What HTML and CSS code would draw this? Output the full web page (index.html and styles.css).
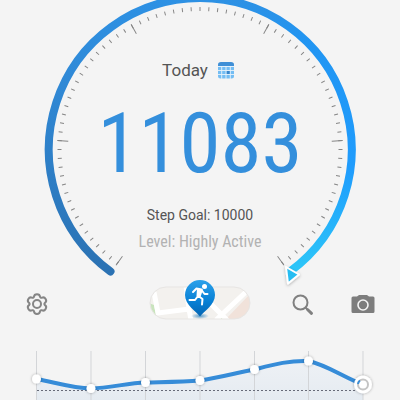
FILE: index.html
```html
<!DOCTYPE html>
<html lang="en">
<head>
<meta charset="utf-8">
<meta name="viewport" content="width=device-width, initial-scale=1">
<title>Step counter</title>
<link rel="stylesheet" href="styles.css">
</head>
<body>
<main class="app">
  <section class="dial">
    <svg class="dial-ring" viewBox="0 0 400 280" aria-hidden="true">
      <defs>
        <linearGradient id="left" gradientUnits="userSpaceOnUse" x1="0" y1="0" x2="0" y2="271">
          <stop offset="0" stop-color="#2d91e4"/>
          <stop offset="0.3" stop-color="#3089d6"/>
          <stop offset="1" stop-color="#2b72b3"/>
        </linearGradient>
        <linearGradient id="right" gradientUnits="userSpaceOnUse" x1="0" y1="0" x2="0" y2="271">
          <stop offset="0" stop-color="#2d91e4"/>
          <stop offset="0.15" stop-color="#2195f2"/>
          <stop offset="0.62" stop-color="#1f9cfd"/>
          <stop offset="1" stop-color="#2cc6f8"/>
        </linearGradient>
        <filter id="soft" x="-50%" y="-50%" width="200%" height="200%">
          <feDropShadow dx="0" dy="1" stdDeviation="1.5" flood-opacity="0.3"/>
        </filter>
      </defs>
      <path class="tick" stroke-width="4" pathLength="288.4" stroke-dasharray="0.4 3.2" d="M117.8 263.5A140.5 140.5 0 1 1 282.2 263.5"/>
      <path class="tick" stroke-width="11" pathLength="288.4" stroke-dasharray="0.4 57.2" d="M119.6 261A137.5 137.5 0 1 1 280.4 261"/>
      <path class="ring" stroke="url(#right)" d="M199.5 -2A151.5 151.5 0 0 1 290 271.5"/>
      <path class="ring ring-start" stroke="url(#left)" d="M110.5 271.5A151.5 151.5 0 0 1 200 -2"/>
      <path d="M286 267L299 274.5L288 283.500Z" fill="#26bdf2" stroke="#fff" stroke-width="2" stroke-linejoin="round" filter="url(#soft)"/>
    </svg>
    <div class="dial-text">
      <button class="day" type="button">Today
        <svg width="16" height="18" viewBox="0 0 16 18" aria-hidden="true">
          <path d="M0 5V3.500Q0 1 3 1H13Q16 1 16 3.500V5Z" fill="#3f8fd6"/>
          <path d="M0 5.500H16V15Q16 17.500 13.500 17.500H2.500Q0 17.500 0 15Z" fill="#74bdf3"/>
          <path d="M8.500 10H12v3H8.500z" fill="#3585cd"/>
          <path d="M0 5.500H16M0 9.500H16M0 13.500H16M3.700 5V18M8 5V18M12.300 5V18" stroke="#e8f3fb" stroke-width="0.900"/>
        </svg>
      </button>
      <p class="steps">11083</p>
      <p class="goal">Step Goal: 10000</p>
      <p class="level">Level: Highly Active</p>
    </div>
  </section>

  <nav class="toolbar">
    <button class="icon" type="button" aria-label="Settings">
      <svg width="24" height="24" viewBox="0 0 24 24" fill="none" stroke="#858585" stroke-width="2" stroke-linejoin="round">
        <path d="M9 4.600C9.300 1.300 14.700 1.300 15 4.600Q15.300 6.300 17 5.700C20 4.300 22.700 9 20 10.800Q18.700 12 20 13.200C22.700 15 20 19.700 17 18.300Q15.300 17.700 15 19.400C14.700 22.700 9.300 22.700 9 19.400Q8.700 17.700 7 18.300C4 19.700 1.300 15 4 13.200Q5.300 12 4 10.800C1.300 9 4 4.300 7 5.700Q8.700 6.300 9 4.600Z"/>
        <circle cx="12" cy="12" r="4"/>
      </svg>
    </button>
    <button class="map" type="button" aria-label="Map">
      <svg width="102" height="44" viewBox="0 2 102 44">
        <defs>
          <clipPath id="pill"><rect x="1" y="9" width="100" height="32" rx="16"/></clipPath>
          <linearGradient id="pin" x1="0" y1="0" x2="0" y2="1">
            <stop offset="0" stop-color="#2ba1ea"/>
            <stop offset="0.6" stop-color="#077fd4"/>
            <stop offset="1" stop-color="#0665b1"/>
          </linearGradient>
          <radialGradient id="glow"><stop offset="0" stop-color="#1675b8" stop-opacity="0.7"/><stop offset="1" stop-color="#1675b8" stop-opacity="0"/></radialGradient>
        </defs>
        <g clip-path="url(#pill)">
          <path d="M0 8H102V42H0Z" fill="#f3f1ee"/>
          <path d="M76 42L102 15V42Z" fill="#f1e2da"/>
          <path d="M0 25L5 27L8 42H0ZM67 42L71 38L76 42Z" fill="#c9e4bd"/>
          <path d="M5 14L9 35L40 31L42 42M40 31L37 8M67 42L100 11M62 26L80 44" fill="none" stroke="#fff" stroke-width="5"/>
        </g>
        <rect x="1" y="9" width="100" height="32" rx="16" fill="none" stroke="#e7e5e3"/>
        <ellipse cx="51" cy="38" rx="9" ry="3" fill="url(#glow)"/>
        <path d="M51 38.500C47 33 36 27 36 17A15 15 0 0 1 66 17C66 27 55 33 51 38.500Z" fill="url(#pin)"/>
        <circle cx="55.500" cy="8.500" r="2.500" fill="#fff"/>
        <path d="M44 14L47.500 10.500L52.500 11.500L49.500 18L53.500 21L53 26.500M49 18L46 22H40.500M52.500 12L55.500 16H58.500" fill="none" stroke="#fff" stroke-width="2" stroke-linecap="round" stroke-linejoin="round"/>
        <path d="M48 10.500L54 11.500L51.500 19L47.500 18Z" fill="#fff"/>
      </svg>
    </button>
    <div class="tools">
      <button class="icon" type="button" aria-label="Search">
        <svg width="24" height="24" viewBox="0 0 24 24" fill="none" stroke="#808080">
          <circle cx="9.500" cy="10.500" r="7" stroke-width="2"/>
          <path d="M14.500 15.500L16 17" stroke-width="2"/>
          <path d="M16.500 17.500L20.500 21.300" stroke-width="3" stroke-linecap="round"/>
        </svg>
      </button>
      <button class="icon" type="button" aria-label="Camera">
        <svg width="24" height="24" viewBox="0 0 24 24">
          <path d="M2 4.500H6L8 3H16L18 4.500H22Q23.500 4.500 23.500 6V19.500Q23.500 21 22 21H2Q0.500 21 0.500 19.500V6Q0.500 4.500 2 4.500Z" fill="#7d7d7d"/>
          <circle cx="12" cy="13" r="5" fill="none" stroke="#f4f4f4" stroke-width="1.600"/>
        </svg>
      </button>
    </div>
  </nav>

  <svg class="chart" viewBox="0 0 400 52" role="img" aria-label="Steps over the last seven days">
    <defs>
      <linearGradient id="area" x1="0" y1="0" x2="0" y2="1">
        <stop offset="0" stop-color="#eef1f5"/>
        <stop offset="1" stop-color="#e5ebf1"/>
      </linearGradient>
      <filter id="dot" x="-60%" y="-60%" width="220%" height="220%">
        <feDropShadow dx="0" dy="0" stdDeviation="1.500" flood-opacity="0.35"/>
      </filter>
    </defs>
    <path fill="url(#area)" d="M36.500 31C54 34 72 40 91 40.500C110 40 128 35 145.500 34.500C164 34 182 34 200 32.500C218 30 236 25 254.500 21.500C272 17 290 12 308.500 13C327 17 345 30 363 36.500V52H36.500Z"/>
    <path class="grid" d="M36.500 3V52M91 3V52M145.500 3V52M200 3V52M254.500 3V52M308.500 3V52M363 3V52"/>
    <path class="target" d="M37 42.500H356"/>
    <path class="trend" d="M36.500 31C54 34 72 40 91 40.500C110 40 128 35 145.500 34.500C164 34 182 34 200 32.500C218 30 236 25 254.500 21.500C272 17 290 12 308.500 13C327 17 345 30 363 36.500"/>
    <g fill="#fff" filter="url(#dot)">
      <circle cx="36.500" cy="31" r="4.500"/>
      <circle cx="91" cy="40.500" r="4.500"/>
      <circle cx="145.500" cy="34.500" r="4.500"/>
      <circle cx="200" cy="32.500" r="4.500"/>
      <circle cx="254.500" cy="21.500" r="4.500"/>
      <circle cx="308.500" cy="13" r="4.500"/>
      <circle cx="363" cy="36.500" r="9"/>
    </g>
    <circle cx="363" cy="36.500" r="5" fill="#fff" stroke="#c4c4c4" stroke-width="2"/>
    <path d="M358 36A5 5 0 0 1 360 32.500" fill="none" stroke="#3a8dd6" stroke-width="2"/>
  </svg>
</main>
</body>
</html>
```
FILE: styles.css
```css
* {
  box-sizing: border-box;
}

body {
  margin: 0;
  background: #f4f4f4;
  color: #555;
  font-family: Roboto, "Liberation Sans", sans-serif;
}

p {
  margin: 0;
}

button {
  display: flex;
  align-items: center;
  padding: 0;
  border: 0;
  background: none;
  color: inherit;
  font: inherit;
  cursor: pointer;
}

svg {
  display: block;
}

.app {
  max-width: 480px;
  margin: 0 auto;
  overflow: hidden;
}

.dial {
  display: grid;
}

.dial-ring,
.dial-text {
  grid-area: 1 / 1;
}

.dial-ring {
  width: 100%;
  overflow: visible;
}

.tick {
  fill: none;
  stroke: #858585;
}

.ring {
  fill: none;
  stroke-width: 8;
}

.ring-start {
  stroke-linecap: round;
}

.dial-text {
  display: flex;
  flex-direction: column;
  align-items: center;
  padding-top: 60px;
}

.day {
  gap: 10px;
  padding-right: 4px;
  font-size: 17px;
  line-height: 20px;
}

.steps {
  margin-top: 14px;
  color: #348fdc;
  font-family: "Roboto Condensed", Roboto, sans-serif;
  font-size: 83px;
  line-height: 100px;
}

.goal {
  margin-top: 10px;
  font-size: 14px;
  line-height: 22px;
}

.level {
  margin-top: 5px;
  color: #b2b2b2;
  font-family: "Roboto Condensed", Roboto, sans-serif;
  font-size: 16px;
  line-height: 22px;
}

.toolbar {
  display: grid;
  grid-template-columns: 1fr auto 1fr;
  align-items: center;
  height: 48px;
  padding: 0 25px;
}

.map {
  align-self: start;
}

.tools {
  display: flex;
  justify-content: flex-end;
  gap: 36px;
}

.chart {
  width: 100%;
  margin-top: 20px;
}

.grid {
  stroke: #d3d5d8;
}

.target {
  stroke: #676b78;
  stroke-dasharray: 2 2;
}

.trend {
  fill: none;
  stroke: #368cd8;
  stroke-width: 4;
}
```
